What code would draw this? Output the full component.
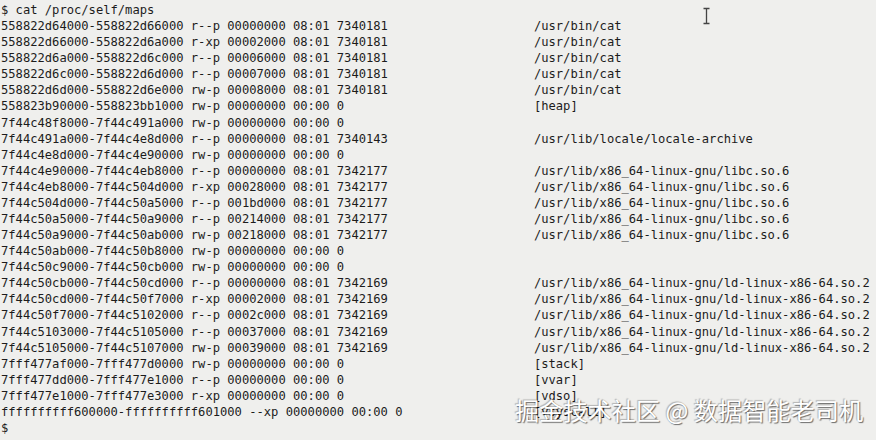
const rows: [string, string][] = [
  ["558822d64000-558822d66000 r--p 00000000 08:01 7340181", "/usr/bin/cat"],
  ["558822d66000-558822d6a000 r-xp 00002000 08:01 7340181", "/usr/bin/cat"],
  ["558822d6a000-558822d6c000 r--p 00006000 08:01 7340181", "/usr/bin/cat"],
  ["558822d6c000-558822d6d000 r--p 00007000 08:01 7340181", "/usr/bin/cat"],
  ["558822d6d000-558822d6e000 rw-p 00008000 08:01 7340181", "/usr/bin/cat"],
  ["558823b90000-558823bb1000 rw-p 00000000 00:00 0", "[heap]"],
  ["7f44c48f8000-7f44c491a000 rw-p 00000000 00:00 0", ""],
  ["7f44c491a000-7f44c4e8d000 r--p 00000000 08:01 7340143", "/usr/lib/locale/locale-archive"],
  ["7f44c4e8d000-7f44c4e90000 rw-p 00000000 00:00 0", ""],
  ["7f44c4e90000-7f44c4eb8000 r--p 00000000 08:01 7342177", "/usr/lib/x86_64-linux-gnu/libc.so.6"],
  ["7f44c4eb8000-7f44c504d000 r-xp 00028000 08:01 7342177", "/usr/lib/x86_64-linux-gnu/libc.so.6"],
  ["7f44c504d000-7f44c50a5000 r--p 001bd000 08:01 7342177", "/usr/lib/x86_64-linux-gnu/libc.so.6"],
  ["7f44c50a5000-7f44c50a9000 r--p 00214000 08:01 7342177", "/usr/lib/x86_64-linux-gnu/libc.so.6"],
  ["7f44c50a9000-7f44c50ab000 rw-p 00218000 08:01 7342177", "/usr/lib/x86_64-linux-gnu/libc.so.6"],
  ["7f44c50ab000-7f44c50b8000 rw-p 00000000 00:00 0", ""],
  ["7f44c50c9000-7f44c50cb000 rw-p 00000000 00:00 0", ""],
  ["7f44c50cb000-7f44c50cd000 r--p 00000000 08:01 7342169", "/usr/lib/x86_64-linux-gnu/ld-linux-x86-64.so.2"],
  ["7f44c50cd000-7f44c50f7000 r-xp 00002000 08:01 7342169", "/usr/lib/x86_64-linux-gnu/ld-linux-x86-64.so.2"],
  ["7f44c50f7000-7f44c5102000 r--p 0002c000 08:01 7342169", "/usr/lib/x86_64-linux-gnu/ld-linux-x86-64.so.2"],
  ["7f44c5103000-7f44c5105000 r--p 00037000 08:01 7342169", "/usr/lib/x86_64-linux-gnu/ld-linux-x86-64.so.2"],
  ["7f44c5105000-7f44c5107000 rw-p 00039000 08:01 7342169", "/usr/lib/x86_64-linux-gnu/ld-linux-x86-64.so.2"],
  ["7fff477af000-7fff477d0000 rw-p 00000000 00:00 0", "[stack]"],
  ["7fff477dd000-7fff477e1000 r--p 00000000 00:00 0", "[vvar]"],
  ["7fff477e1000-7fff477e3000 r-xp 00000000 00:00 0", "[vdso]"],
  ["ffffffffff600000-ffffffffff601000 --xp 00000000 00:00 0", "[vsyscall]"],
];

const pad = (s: string, path: string) => (path ? s.padEnd(73, " ") + path : s);

export default function App() {
  const text = ["$ cat /proc/self/maps", ...rows.map(([s, p]) => pad(s, p)), "$ "].join("\n");

  return (
    <div className="relative w-[876px] h-[440px] overflow-hidden bg-[#efefed]">
      <pre className="pt-[2px] pl-[1px] text-[12.13px] leading-[16.08px] text-[#1c1c1c] font-['DejaVu_Sans_Mono',monospace] whitespace-pre">
        {text}
      </pre>

      {/* mouse I-beam */}
      <svg className="absolute left-[702px] top-[7px]" width="9" height="18" viewBox="0 0 9 18">
        <path d="M1.5 1.5h6M4.5 1.5v15M1.5 16.5h6" stroke="#444" strokeWidth="1.3" fill="none" />
      </svg>

      {/* watermark */}
      <div className="absolute left-[515px] top-[395px] text-[24.2px] leading-[30px] text-white font-['Noto_Sans_CJK_SC',sans-serif] whitespace-nowrap [text-shadow:1px_1px_1px_rgba(0,0,0,0.55),-1px_-1px_1px_rgba(0,0,0,0.25)]">
        掘金技术社区 @ 数据智能老司机
      </div>
    </div>
  );
}
